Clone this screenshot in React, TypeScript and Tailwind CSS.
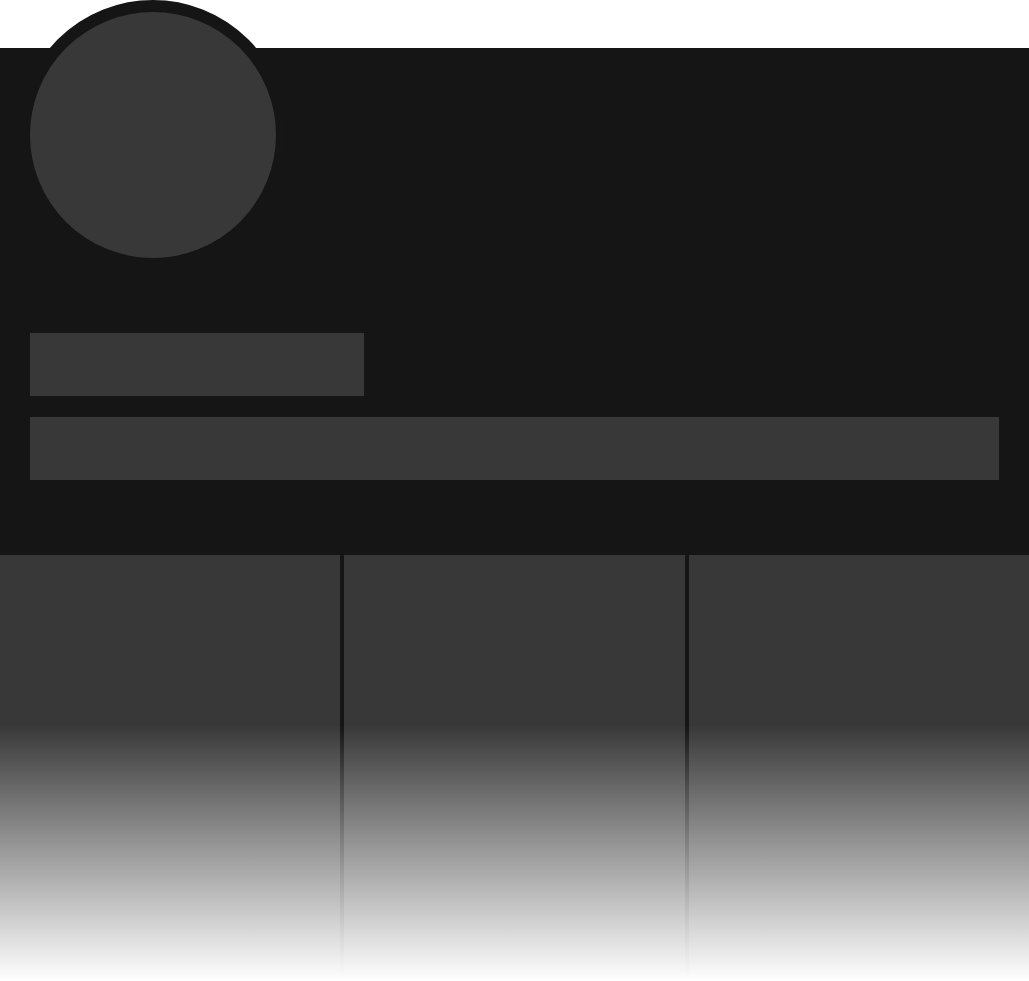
export default function App() {
  return (
    <div className="min-h-screen bg-white pt-12 font-['Liberation_Sans',sans-serif]">
      <div className="flow-root bg-[#151515] pl-[30px] pr-[30px] pb-[75px]">
        <div className="-mt-12 -ml-3 h-[270px] w-[270px] rounded-full border-[12px] border-[#151515] bg-[#383838]" />
        <div className="mt-[63px] h-[63px] w-[334px] bg-[#383838]" />
        <div className="mt-[21px] h-[63px] w-full bg-[#383838]" />
      </div>
      <div className="relative">
        <div className="grid h-[426px] grid-cols-3 gap-1 bg-[#151515]">
          <div className="bg-[#383838]" />
          <div className="bg-[#383838]" />
          <div className="bg-[#383838]" />
        </div>
        <div className="pointer-events-none absolute inset-x-0 top-[170px] bottom-0 bg-gradient-to-b from-white/0 to-white" />
      </div>
    </div>
  )
}
